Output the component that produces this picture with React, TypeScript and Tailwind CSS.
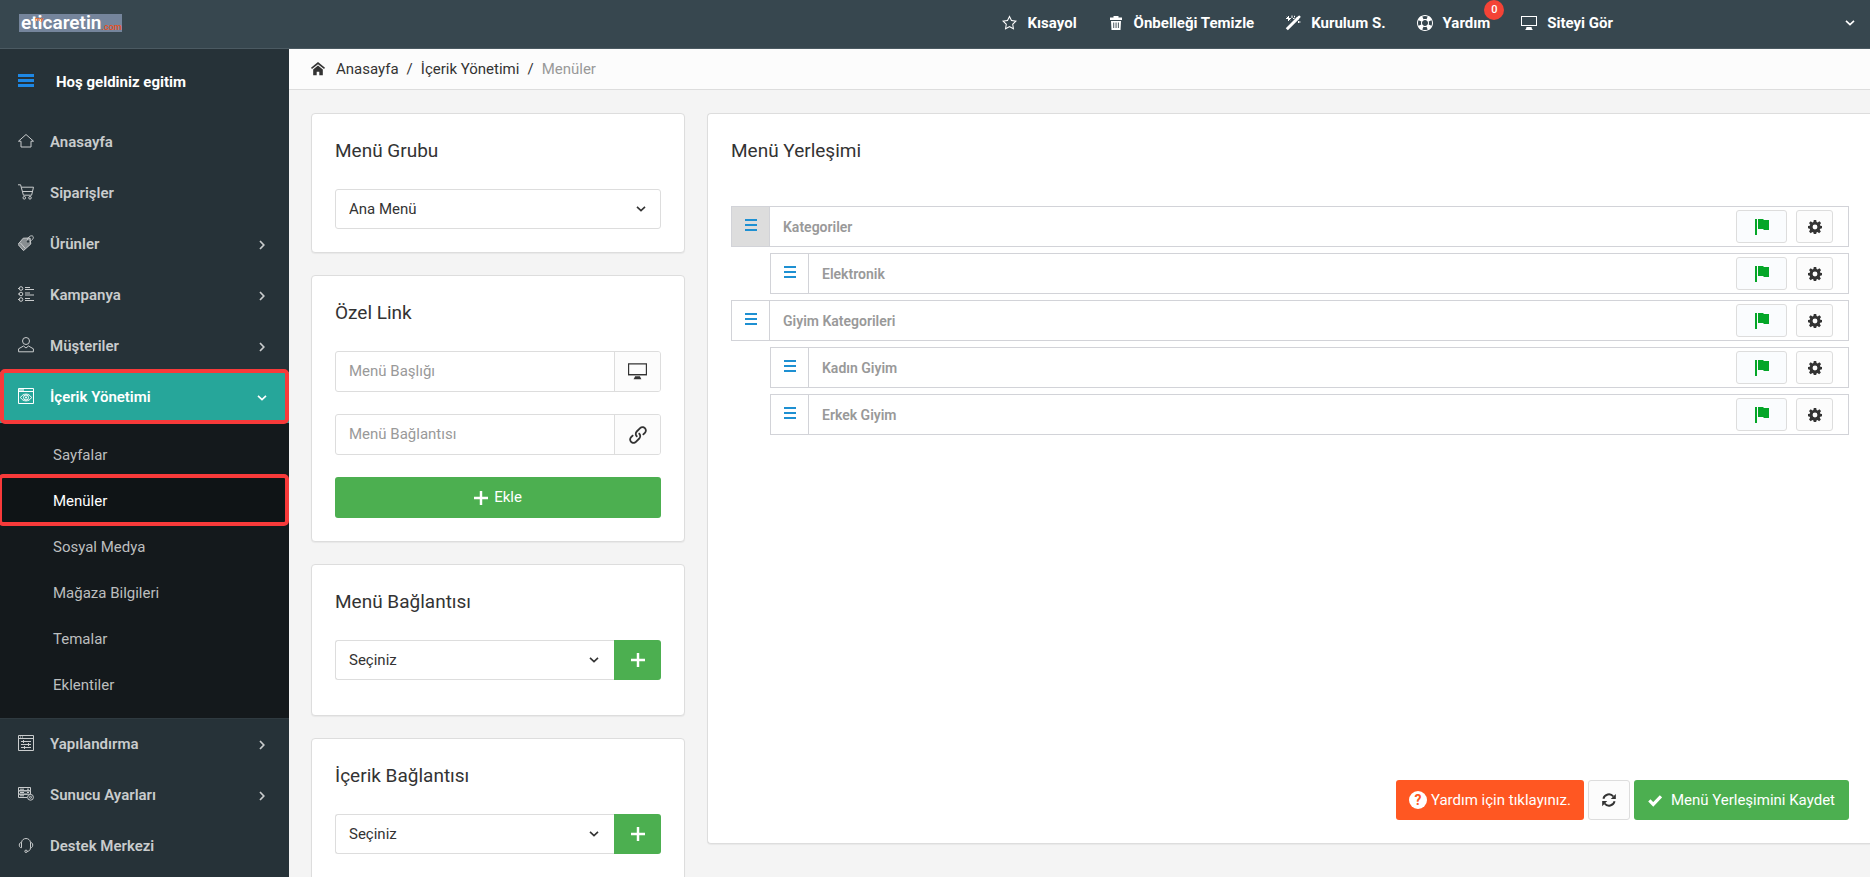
import type { ReactNode } from "react";
import { ImStarEmpty, ImLifebuoy, ImDisplay, ImLink } from "react-icons/im";

const stroke = { fill: "none", stroke: "currentColor", strokeWidth: 1 } as const;

function Svg({ children, className = "size-4" }: { children: ReactNode; className?: string }) {
  return (
    <svg viewBox="0 0 16 16" aria-hidden="true" className={`${className} shrink-0`}>
      {children}
    </svg>
  );
}

const HomeOutline = () => (
  <Svg><path {...stroke} d="M.5 8.200 8 1.500l7.500 6.700H13v5.800H3V8.200z" strokeLinejoin="round" /></Svg>
);
const Cart = () => (
  <Svg>
    <path {...stroke} d="M0 .8h2.600L5.400 11.200h8.200l1.900-8H3.400M4.500 7.500h9.800" />
    <circle {...stroke} cx="6.300" cy="13.800" r="1.300" /><circle {...stroke} cx="12" cy="13.800" r="1.300" />
  </Svg>
);
const Tag = () => (
  <Svg>
    <path d="M5.200 3.200 12 3l.8 6L5.500 15.600 0 9.400z" fill="currentColor" opacity=".6" />
    <path {...stroke} d="M5.200 3.200 12 3l.8 6L5.500 15.600 0 9.400zM2.500 8l4.800 5.500" />
    <path {...stroke} d="M9.500 7C8.500 4 11 .9 13.500.8c2.500 0 2.400 3-.2 4.700" />
    <circle cx="10" cy="6.400" r="1.200" className="fill-[#263238]" />
  </Svg>
);
const ListIcon = () => (
  <Svg>
    {[2.500, 8, 13.500].map((y) => (
      <g key={y}>
        <circle {...stroke} cx="3" cy={y} r="1.800" />
        <path {...stroke} d={`M0 ${y}h1.500M7 ${y - 1}h5M7 ${y + 1}h9`} />
      </g>
    ))}
  </Svg>
);
const User = () => (
  <Svg>
    <circle {...stroke} cx="8" cy="4" r="3.500" />
    <path {...stroke} d="M5.500 9 .6 11.800v3h14.800v-3L10.500 9M5.500 9l2.500 2 2.500-2" />
  </Svg>
);
const EyeWindow = () => (
  <Svg>
    <path {...stroke} d="M.5.5h15v15H.5zM.5 3.500h15" />
    <path d="M1 1h5v2H1z" fill="currentColor" opacity=".6" />
    <path {...stroke} d="M2.500 9.500c2.500-4.500 8.500-4.500 11 0-2.500 4.500-8.500 4.500-11 0z" />
    <circle {...stroke} cx="8" cy="9.500" r="2.500" /><circle cx="8" cy="9.500" r="1" fill="currentColor" />
  </Svg>
);
const SettingsWindow = () => (
  <Svg>
    <path {...stroke} d="M.5.5h15v15H.5zM.5 3.500h15M2 2h1M4 2h1M3 6.500h10M3 9.500h10M3 12.500h10M5.500 5v3M10.500 8v3M6.500 11v3" />
  </Svg>
);
const Server = () => (
  <Svg>
    <path {...stroke} d="M.5 1.500h12v3.300H.5zM.5 4.800h12v3.400H.5zM9 11.500H.5V8.200h9M2 3.200h4M2 6.500h4M2 9.800h4M9 3.200h2M9 6.500h2" />
    <circle {...stroke} cx="12.500" cy="11.300" r="2.900" /><circle {...stroke} cx="12.500" cy="11.300" r="1" />
  </Svg>
);
const Headset = () => (
  <Svg>
    <path {...stroke} d="M3.500 5.500C4 .2 12 .2 12.500 5.500M3.500 5.500v5.200C.5 11 .5 5.200 3.500 5.500zM12.500 5.500v5.200c3 .3 3-5.500 0-5.200zM12.500 10.700c0 2.500-1.500 3.500-3.500 3.800" />
    <circle {...stroke} cx="8" cy="14.300" r="1.200" />
  </Svg>
);
const HomeSolid = () => (
  <Svg className="size-[14px]">
    <path d="M8 0 0 6.700l1.100 1.400L8 2.500l6.900 5.600L16 6.700z" fill="currentColor" />
    <path d="M8 4 2.500 8.500V15h4v-4h3v4h4V8.500z" fill="currentColor" />
  </Svg>
);
const Trash = () => (
  <Svg>
    <path fill="currentColor" fillRule="evenodd" d="M5.500 1h5v1.500H14V5H2V2.500h3.500zM3 6h10l-.5 9h-9zM5.300 7.500V13h.9V7.500zM7.600 7.500V13h.9V7.500zM9.900 7.500V13h.9V7.500z" />
  </Svg>
);
const Wand = () => (
  <Svg>
    <path d="M1.800 14.200 12.800 3.200" stroke="currentColor" strokeWidth="3" />
    <path d="M12.500 3.500l1.700-1.700" stroke="currentColor" strokeWidth="2.600" strokeLinecap="round" />
    <path {...stroke} d="M3.500 1v5M1 3.500h5M7 .5v2.500M13.500 6v2M1.800 1.800l3.400 3.400M8 3.500h1.500M13 7h2.500M9.500.8v1.500" />
  </Svg>
);
const Flag = () => (
  <Svg><path fill="currentColor" d="M1 0h2v16H1zM4 0h5.500v1H15v10H9.500v-1H4z" /></Svg>
);
const Cog = () => (
  <Svg className="size-[14px]">
    <path fill="currentColor" fillRule="evenodd" d="M6.600 0h2.800l.4 2.200 1.300.6L13 1.500l1.900 2-1.300 1.800.5 1.300 1.900.3v2.600l-2 .4-.6 1.300 1.300 1.800-2 2-1.800-1.300-1.200.6-.4 2H6.600l-.4-2-1.300-.6-1.800 1.300-1.900-2 1.200-1.800-.5-1.300-1.900-.4V6.900l2-.3.500-1.300L1.200 3.500l1.900-2 1.900 1.300 1.200-.6zM8 5.200a2.800 2.800 0 1 0 0 5.600 2.800 2.800 0 0 0 0-5.600z" />
  </Svg>
);
const Refresh = () => (
  <Svg className="size-[14px]">
    <path d="M1.600 6.500A6.500 6.500 0 0 1 13 4M14.400 9.500A6.500 6.500 0 0 1 3 12" fill="none" stroke="currentColor" strokeWidth="2.200" />
    <path d="M15.800 1v5.800H10zM.2 15V9.200H6z" fill="currentColor" />
  </Svg>
);
const Check = () => (
  <Svg className="size-[14px]"><path d="M1.500 8.500 6 13 14.800 3.800" fill="none" stroke="currentColor" strokeWidth="3.600" /></Svg>
);
const Plus = () => (
  <Svg className="size-[14px]"><path d="M8 0v16M0 8h16" stroke="currentColor" strokeWidth="2.800" /></Svg>
);
const Monitor = () => (
  <Svg className="size-[19px]">
    <path {...stroke} d="M.5 1.500h15v9.200H.5z" />
    <path d="M0 10.500h16v1H0z" fill="currentColor" opacity=".35" />
    <path d="M6 12h4l1.300 2.500H4.700z" fill="currentColor" />
  </Svg>
);

function ChevronDown({ className = "" }: { className?: string }) {
  return (
    <svg viewBox="0 0 10 6" aria-hidden="true" className={`h-[6px] w-[10px] shrink-0 ${className}`}>
      <path d="M1 .8 5 4.600 9 .8" fill="none" stroke="currentColor" strokeWidth="1.600" />
    </svg>
  );
}
function ChevronRight() {
  return (
    <svg viewBox="0 0 6 10" aria-hidden="true" className="mr-[2px] h-[10px] w-[6px] shrink-0">
      <path d="M1 1l3.800 4L1 9" fill="none" stroke="currentColor" strokeWidth="1.700" />
    </svg>
  );
}

function Bars({ className }: { className: string }) {
  return (
    <span aria-hidden="true" className={`flex flex-col ${className}`}>
      <i className="block h-full bg-current" />
      <i className="block h-full bg-current" />
      <i className="block h-full bg-current" />
    </span>
  );
}

function Logo() {
  return (
    <a href="#" aria-label="eticaretin.com" className="relative flex h-[18px] w-[103px] items-center bg-[#75859c] pl-[2px]">
      <span className="text-[19px] leading-[18px] font-semibold text-white">eticaretin</span>
      <span className="text-[9px] leading-[9px] self-end font-medium text-[#e8501e]">.com</span>
      <span className="absolute top-[2px] left-4 text-[6px] leading-[6px] font-bold text-[#e8702e]">my</span>
    </a>
  );
}

const topLinks = [
  { label: "Kısayol", icon: <ImStarEmpty className="size-[15px]" /> },
  { label: "Önbelleği Temizle", icon: <Trash /> },
  { label: "Kurulum S.", icon: <Wand /> },
  { label: "Yardım", icon: <ImLifebuoy className="size-4" />, badge: "0" },
  { label: "Siteyi Gör", icon: <ImDisplay className="size-4" /> },
];

function Header() {
  return (
    <header className="flex h-[49px] shrink-0 items-center border-b border-[#4b5a62] bg-[#37474f] pr-[15px] pb-[3px] pl-[19px] text-white">
      <Logo />
      <nav className="mr-[232px] ml-auto flex gap-[31px]">
        {topLinks.map((l) => (
          <a key={l.label} href="#" className="relative flex items-center gap-[10px] text-[15px] leading-5 font-bold">
            <span className="flex w-4 justify-center">{l.icon}</span>
            {l.label}
            {l.badge && (
              <span className="absolute -top-[13px] -right-[14px] flex size-5 items-center justify-center rounded-full bg-[#f44336] text-[11px] font-medium">
                {l.badge}
              </span>
            )}
          </a>
        ))}
      </nav>
      <button type="button" aria-label="Hesap"><ChevronDown className="block" /></button>
    </header>
  );
}

const subItems = ["Sayfalar", "Menüler", "Sosyal Medya", "Mağaza Bilgileri", "Temalar", "Eklentiler"];

function NavItem({ icon, label, arrow, active }: { icon: ReactNode; label: string; arrow?: boolean; active?: boolean }) {
  return (
    <a
      href="#"
      className={`relative flex h-[51px] items-center pr-[22px] pl-[18px] text-[15px] font-semibold ${active ? "z-10 bg-[#26a69a] text-white" : "text-[#c9cccd]"}`}
    >
      <span className="pb-1">{icon}</span>
      <span className="ml-4 grow">{label}</span>
      {arrow && (active ? <ChevronDown /> : <ChevronRight />)}
      {active && <span className="absolute inset-x-0 -top-[3px] -bottom-px rounded-[5px] border-4 border-[#f83a3a]" />}
    </a>
  );
}

function Sidebar() {
  return (
    <aside className="w-[289px] shrink-0 overflow-hidden bg-[#263238]">
      <div className="flex h-[68px] items-center pb-[2px] pl-[18px]">
        <span className="pb-[3px]"><Bars className="h-[13px] w-4 gap-[2px] text-[#1e88e5]" /></span>
        <span className="ml-[22px] text-[15px] font-bold text-white">Hoş geldiniz egitim</span>
      </div>
      <nav>
        <NavItem icon={<HomeOutline />} label="Anasayfa" />
        <NavItem icon={<Cart />} label="Siparişler" />
        <NavItem icon={<Tag />} label="Ürünler" arrow />
        <NavItem icon={<ListIcon />} label="Kampanya" arrow />
        <NavItem icon={<User />} label="Müşteriler" arrow />
        <NavItem icon={<EyeWindow />} label="İçerik Yönetimi" arrow active />
        <ul className="border-b border-[#2f3a40] bg-[#14191c] pt-[9px] pb-[10px]">
          {subItems.map((s) => (
            <li key={s}>
              <a
                href="#"
                className={`relative flex h-[46px] items-center pl-[53px] text-[15px] ${s === "Menüler" ? "bg-[#0f1416] text-white" : "text-[#bcbebf]"}`}
              >
                {s}
                {s === "Menüler" && (
                  <span className="absolute right-0 -left-[2px] -top-1 -bottom-[2px] rounded-[5px] border-4 border-[#f83a3a]" />
                )}
              </a>
            </li>
          ))}
        </ul>
        <NavItem icon={<SettingsWindow />} label="Yapılandırma" arrow />
        <NavItem icon={<Server />} label="Sunucu Ayarları" arrow />
        <NavItem icon={<Headset />} label="Destek Merkezi" />
      </nav>
    </aside>
  );
}

function Card({ title, children, className = "pb-[23px]" }: { title: string; children: ReactNode; className?: string }) {
  return (
    <section className={`rounded-[4px] border border-[#ddd] bg-white px-[23px] pt-[23px] shadow-[0_1px_1px_rgba(0,0,0,0.05)] ${className}`}>
      <h2 className="mb-[25px] text-[19px] leading-[27px]">{title}</h2>
      {children}
    </section>
  );
}

function Select({ label, value, className = "rounded-[3px]" }: { label: string; value: string; className?: string }) {
  return (
    <div className="relative flex grow items-center">
      <select aria-label={label} className={`h-10 w-full appearance-none border border-[#ddd] bg-white px-[13px] text-[15px] ${className}`}>
        <option>{value}</option>
      </select>
      <ChevronDown className="pointer-events-none absolute right-[15px]" />
    </div>
  );
}

function Field({ label, icon }: { label: string; icon: ReactNode }) {
  return (
    <label className="mb-[22px] flex h-[41px] overflow-hidden rounded-[3px] border border-[#ddd]">
      <input aria-label={label} placeholder={label} className="min-w-0 grow px-[13px] text-[15px] outline-none placeholder:text-[#999]" />
      <span className="flex w-[46px] items-center justify-center border-l border-[#ddd] bg-[#fcfcfc]">{icon}</span>
    </label>
  );
}

function SelectAdd({ label }: { label: string }) {
  return (
    <div className="flex">
      <Select label={label} value="Seçiniz" className="rounded-l-[3px] border-r-0" />
      <button type="button" aria-label="Ekle" className="flex w-[47px] shrink-0 items-center justify-center rounded-r-[3px] bg-[#4caf50] text-white">
        <Plus />
      </button>
    </div>
  );
}

function TreeRow({ label, nested, shaded }: { label: string; nested?: boolean; shaded?: boolean }) {
  return (
    <li className={`flex h-[41px] border border-[#d2d3d8] ${nested ? "ml-[39px]" : ""}`}>
      <button type="button" aria-label={`${label} taşı`} className={`flex w-[38px] shrink-0 justify-center border-r border-[#d2d3d8] pt-3 text-[#1e90d2] ${shaded ? "bg-[#ddd]" : ""}`}>
        <Bars className="h-3 w-3 gap-[3px]" />
      </button>
      <span className="grow self-center pl-[13px] text-sm font-semibold text-[#999]">{label}</span>
      <div className="flex items-center gap-[9px] pr-[15px]">
        <button type="button" aria-label={`${label} durumu`} className="flex h-[33px] w-[51px] items-center justify-center rounded-[3px] border border-[#ddd] bg-[#fafcfe] text-[#04a628]">
          <Flag />
        </button>
        <button type="button" aria-label={`${label} ayarları`} className="flex h-[33px] w-[37px] items-center justify-center rounded-[3px] border border-[#ddd] bg-[#fcfcfc]">
          <Cog />
        </button>
      </div>
    </li>
  );
}

export default function App() {
  return (
    <div className="flex h-screen flex-col overflow-hidden bg-[#f4f4f4] font-[Roboto,'Liberation_Sans',sans-serif] text-[#333]">
      <Header />
      <div className="flex min-h-0 grow">
        <Sidebar />
        <main className="min-w-0 grow overflow-y-auto [scrollbar-width:none]">
          <nav className="flex h-[41px] items-center border-b border-[#ddd] bg-[#fcfcfc] pl-[22px] text-[15px]">
            <HomeSolid />
            <a href="#" className="ml-[11px]">Anasayfa</a>
            <span className="mx-2">/</span>
            <a href="#">İçerik Yönetimi</a>
            <span className="mx-2">/</span>
            <span className="text-[#999]">Menüler</span>
          </nav>
          <div className="flex items-start gap-[22px] pt-[23px] pb-[22px] pl-[22px]">
            <div className="flex w-[374px] shrink-0 flex-col gap-[22px]">
              <Card title="Menü Grubu">
                <Select label="Menü Grubu" value="Ana Menü" />
              </Card>
              <Card title="Özel Link">
                <Field label="Menü Başlığı" icon={<Monitor />} />
                <Field label="Menü Bağlantısı" icon={<ImLink className="size-[18px]" />} />
                <button type="button" className="flex h-[41px] w-full items-center justify-center gap-[6px] rounded-[3px] bg-[#4caf50] text-[15px] text-white">
                  <Plus />
                  Ekle
                </button>
              </Card>
              <Card title="Menü Bağlantısı" className="pb-[35px]">
                <SelectAdd label="Menü Bağlantısı" />
              </Card>
              <Card title="İçerik Bağlantısı" className="pb-[35px]">
                <SelectAdd label="İçerik Bağlantısı" />
              </Card>
            </div>
            <section className="min-w-0 grow rounded-l-[4px] border border-r-0 border-[#ddd] bg-white py-[23px] pr-[21px] pl-[23px] shadow-[0_1px_1px_rgba(0,0,0,0.05)]">
              <h2 className="mb-[42px] text-[19px] leading-[27px]">Menü Yerleşimi</h2>
              <ul className="flex min-h-[574px] flex-col gap-[6px]">
                <TreeRow label="Kategoriler" shaded />
                <TreeRow label="Elektronik" nested />
                <TreeRow label="Giyim Kategorileri" />
                <TreeRow label="Kadın Giyim" nested />
                <TreeRow label="Erkek Giyim" nested />
              </ul>
              <div className="flex h-10 justify-end gap-1 text-[15px] text-white">
                <button type="button" className="flex items-center gap-1 rounded-[3px] bg-[#ff5722] px-[13px]">
                  <span className="flex size-[18px] items-center justify-center rounded-full bg-white text-sm font-bold text-[#ff5722]">?</span>
                  Yardım için tıklayınız.
                </button>
                <button type="button" aria-label="Yenile" className="flex w-[42px] items-center justify-center rounded-[3px] border border-[#ddd] bg-[#fcfcfc] text-[#333]">
                  <Refresh />
                </button>
                <button type="button" className="flex items-center gap-[9px] rounded-[3px] bg-[#4caf50] px-[14px]">
                  <Check />
                  Menü Yerleşimini Kaydet
                </button>
              </div>
            </section>
          </div>
        </main>
      </div>
    </div>
  );
}
